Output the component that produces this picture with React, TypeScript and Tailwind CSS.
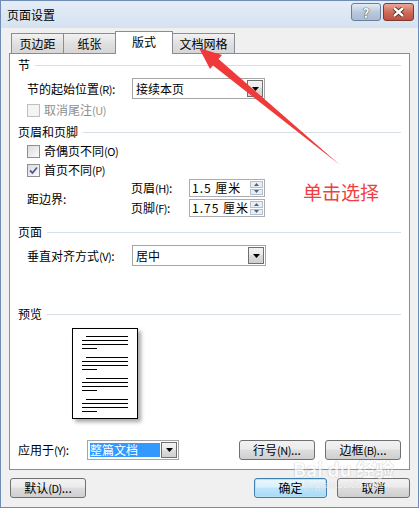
import React from 'react';

const font = "font-['Noto_Sans_CJK_SC','Noto_Sans',sans-serif]";

function Hdr({ t, mt }: { t: string; mt: string }) {
  return (
    <div className={`flex items-center h-[14px] pl-[8px] pr-[8px] gap-[5px] ${mt}`}>
      <span className="leading-[14px] text-black">{t}</span>
      <div className="flex-1 h-px bg-[#d5dfe5]" />
    </div>
  );
}

// access keys (hidden underline, like Win7 until Alt is pressed)
function Key({ k }: { k: string }) {
  return <span className="text-[11px] tracking-[-0.5px]">({k})</span>;
}

function Check({ on, off }: { on?: boolean; off?: boolean }) {
  return (
    <div
      className={`w-[13px] h-[13px] border flex items-center justify-center ${
        off ? 'border-[#c0c0c0] bg-[#f4f4f4]' : 'border-[#8e8f8f] bg-[linear-gradient(135deg,#dcdcdc,#fbfbfb)]'
      }`}
    >
      {on && (
        <svg width="9" height="9" viewBox="0 0 9 9">
          <path d="M1 4.5 L3.5 7 L8 1.5" stroke="#4a5f97" strokeWidth="1.8" fill="none" />
        </svg>
      )}
    </div>
  );
}

function DropBtn() {
  return (
    <div className="w-[16px] self-stretch border border-[#707070] bg-[linear-gradient(#f2f2f2_0%,#ebebeb_45%,#dddddd_50%,#cfcfcf_100%)] flex items-center justify-center">
      <svg width="7" height="4" viewBox="0 0 7 4">
        <path d="M0 0 H7 L3.5 4 Z" fill="#000" />
      </svg>
    </div>
  );
}

function Btn({ children, w, def }: { children: React.ReactNode; w: string; def?: boolean }) {
  return (
    <div
      className={`${w} h-[20px] rounded-[3px] border flex items-center justify-center text-[12px] ${
        def
          ? 'border-[#3c7fb1] shadow-[inset_0_0_0_1px_#b6e4f7] bg-[linear-gradient(#eaf6fd_0%,#d9f0fc_45%,#bee6fd_50%,#a7d9f5_100%)]'
          : 'border-[#707070] bg-[linear-gradient(#f2f2f2_0%,#ebebeb_45%,#dddddd_50%,#cfcfcf_100%)]'
      }`}
    >
      {children}
    </div>
  );
}

function Spin({ v }: { v: string }) {
  return (
    <div className="w-[76px] h-[18px] border border-[#abadb3] bg-white flex items-stretch">
      <span className="flex-1 pl-[2px] leading-[16px] tracking-[1px]">{v}</span>
      <div className="w-[15px] flex flex-col gap-px p-px">
        <div className="flex-1 border border-[#b4c0cc] bg-[#e8eef4] flex items-center justify-center">
          <svg width="5" height="3" viewBox="0 0 5 3"><path d="M0 3 H5 L2.5 0 Z" fill="#4d6185" /></svg>
        </div>
        <div className="flex-1 border border-[#b4c0cc] bg-[#e8eef4] flex items-center justify-center">
          <svg width="5" height="3" viewBox="0 0 5 3"><path d="M0 0 H5 L2.5 3 Z" fill="#4d6185" /></svg>
        </div>
      </div>
    </div>
  );
}

function Para() {
  return (
    <div className="flex flex-col gap-[3px] mb-[8px]">
      <div className="ml-[13px] w-[42px] h-px bg-black" />
      <div className="ml-[9px] w-[46px] h-px bg-black" />
      <div className="ml-[9px] w-[46px] h-px bg-black" />
      <div className="ml-[9px] w-[15px] h-px bg-black" />
    </div>
  );
}

export default function App() {
  return (
    <div className={`relative w-[419px] h-[508px] overflow-hidden bg-[#f0f0f0] border border-[#6e8cb4] text-[12px] text-black ${font}`}>
      {/* title bar */}
      <div className="h-[27px] flex items-center pl-[6px] pr-[4px] bg-[linear-gradient(#e4edf7,#d5e2f1)]">
        <span className="text-[12px]">页面设置</span>
        <div className="flex-1" />
        <div className="flex gap-[2px] self-start mt-[2px]">
          <div className="w-[30px] h-[18px] rounded-[3px] border border-[#6d7f97] bg-[linear-gradient(#e4ecf6,#b9c9dd_50%,#a9bcd4)] flex items-center justify-center">
            <span className="text-white font-bold text-[13px] leading-none [text-shadow:0_0_1px_#333,0_0_1px_#333]">?</span>
          </div>
          <div className="w-[31px] h-[18px] rounded-[3px] border border-[#7a3a34] bg-[linear-gradient(#e9a99c,#cf6c5b_50%,#c0503f)] flex items-center justify-center">
            <svg width="13" height="10" viewBox="0 0 13 10">
              <path d="M2 1 L11 9 M11 1 L2 9" stroke="#3a1a16" strokeWidth="4" />
              <path d="M2 1 L11 9 M11 1 L2 9" stroke="#fff" strokeWidth="2.4" />
            </svg>
          </div>
        </div>
      </div>

      <div className="pl-[8px] pr-[8px]">
        {/* tabs */}
        <div className="mt-[3px] h-[22px] flex items-end pl-[2px]">
          <div className="w-[53px] h-[20px] border border-b-0 border-[#898c95] bg-[linear-gradient(#f2f2f2,#e0e0e0_50%,#d6d6d6)] flex items-center justify-center">页边距</div>
          <div className="-ml-px w-[53px] h-[20px] border border-b-0 border-[#898c95] bg-[linear-gradient(#f2f2f2,#e0e0e0_50%,#d6d6d6)] flex items-center justify-center">纸张</div>
          <div className="-ml-px relative z-10 w-[58px] h-[23px] -mb-px border border-b-0 border-[#898c95] bg-white flex items-center justify-center pb-[2px]">版式</div>
          <div className="-ml-px w-[63px] h-[20px] border border-b-0 border-[#898c95] bg-[linear-gradient(#f2f2f2,#e0e0e0_50%,#d6d6d6)] flex items-center justify-center">文档网格</div>
        </div>

        {/* panel */}
        <div className="h-[417px] border border-[#898c95] bg-white flex flex-col">
          <Hdr t="节" mt="mt-[4px]" />
          <div className="mt-[6px] h-[21px] flex items-center pl-[17px]">
            <span className="w-[105px]">节的起始位置<Key k="R" />:</span>
            <div className="w-[133px] h-[21px] border border-[#a5a5a5] flex items-stretch p-px">
              <span className="flex-1 pl-[2px] leading-[17px]">接续本页</span>
              <DropBtn />
            </div>
          </div>
          <div className="mt-[4px] h-[14px] flex items-center pl-[17px] gap-[4px] text-[#8d8d8d]">
            <Check off />
            <span>取消尾注<Key k="U" /></span>
          </div>
          <Hdr t="页眉和页脚" mt="mt-[8px]" />
          <div className="mt-[5px] h-[14px] flex items-center pl-[17px] gap-[4px]">
            <Check />
            <span>奇偶页不同<Key k="O" /></span>
          </div>
          <div className="mt-[5px] h-[14px] flex items-center pl-[17px] gap-[4px]">
            <Check on />
            <span>首页不同<Key k="P" /></span>
          </div>
          <div className="mt-[2px] flex items-center pl-[17px]">
            <span className="w-[104px] pt-[2px]">距边界:</span>
            <div className="flex flex-col gap-[2px]">
              <div className="flex items-center">
                <span className="w-[58px]">页眉<Key k="H" />:</span>
                <Spin v="1.5 厘米" />
              </div>
              <div className="flex items-center">
                <span className="w-[58px]">页脚<Key k="F" />:</span>
                <Spin v="1.75 厘米" />
              </div>
            </div>
          </div>
          <Hdr t="页面" mt="mt-[8px]" />
          <div className="mt-[6px] h-[21px] flex items-center pl-[17px]">
            <span className="w-[105px]">垂直对齐方式<Key k="V" />:</span>
            <div className="w-[134px] h-[21px] border border-[#a5a5a5] flex items-stretch p-px">
              <span className="flex-1 pl-[2px] leading-[17px]">居中</span>
              <DropBtn />
            </div>
          </div>
          <Hdr t="预览" mt="mt-[41px]" />
          <div className="mt-[7px] ml-[62px] w-[66px] h-[91px] border border-black bg-white pt-[7px] shadow-[3px_3px_4px_rgba(0,0,0,0.35)]">
            <Para />
            <Para />
            <Para />
            <Para />
          </div>
          <div className="mt-[21px] h-[20px] flex items-center pl-[8px] pr-[8px]">
            <span className="w-[69px]">应用于<Key k="Y" />:</span>
            <div className="w-[92px] h-[20px] border border-[#a5a5a5] flex items-stretch p-px">
              <div className="flex-1 flex items-center pl-px pr-px">
                <span className="bg-[#3399ff] text-white w-full leading-[14px]">整篇文档</span>
              </div>
              <DropBtn />
            </div>
            <div className="flex-1" />
            <div className="flex gap-[10px]">
              <Btn w="w-[76px]">行号<Key k="N" />...</Btn>
              <Btn w="w-[76px]">边框<Key k="B" />...</Btn>
            </div>
          </div>
        </div>

        {/* bottom buttons */}
        <div className="mt-[8px] flex items-center">
          <div className="ml-px">
            <Btn w="w-[76px]">默认<Key k="D" />...</Btn>
          </div>
          <div className="flex-1" />
          <div className="flex gap-[10px]">
            <Btn w="w-[73px]" def>确定</Btn>
            <Btn w="w-[73px]">取消</Btn>
          </div>
        </div>
      </div>

      {/* annotation arrow */}
      <svg className="absolute left-0 top-0 pointer-events-none" width="419" height="508" viewBox="0 0 419 508">
        <polygon points="198,47 221,54 217.5,58 339,164 212,64.5 209,68" fill="#f03a3a" />
      </svg>
      <span className="absolute left-[302px] top-[180px] text-[19px] leading-[22px] text-[#f23e3e]">单击选择</span>

      {/* watermark */}
      <div className="absolute left-[292px] top-[458px] flex flex-col items-center pointer-events-none opacity-60">
        <span className="text-[19px] font-bold leading-[20px] text-white [text-shadow:0_0_1px_#a0a0a0,0_0_1px_#a0a0a0]">Bai du 经验</span>
        <span className="text-[9px] leading-[12px] text-white [text-shadow:0_0_1px_#a0a0a0]">jingyan.baidu.com</span>
      </div>
    </div>
  );
}
